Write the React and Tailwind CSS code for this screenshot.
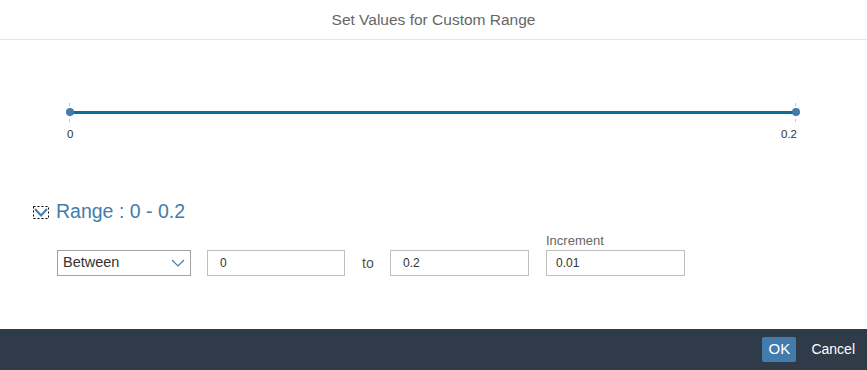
export default function App() {
  const font = { fontFamily: '"Liberation Sans", Arial, sans-serif' };
  return (
    <div className="w-[867px] h-[370px] bg-white flex flex-col overflow-hidden text-[#333]" style={font}>
      <div className="h-[40px] border-b border-[#e5e5e5] flex items-center justify-center text-[15.5px] text-[#666] pt-[1px]">
        Set Values for Custom Range
      </div>
      <div className="flex-1 flex flex-col">
        {/* slider */}
        <div className="relative h-[100px] ml-[66px] mt-[64px] w-[734px]">
          <div className="absolute left-[4px] right-[4px] top-[7px] h-[3px] bg-[#0a6e9c]" />
          <div className="absolute left-[3px] top-[-1px] h-[19px] border-l border-dashed border-[#c8c8c8]" />
          <div className="absolute right-[4px] top-[-1px] h-[19px] border-l border-dashed border-[#c8c8c8]" />
          <div className="absolute left-0 top-[4px] w-[8px] h-[8px] rounded-full bg-[#427cac]" />
          <div className="absolute right-0 top-[4px] w-[8px] h-[8px] rounded-full bg-[#427cac]" />
          <div className="absolute left-[1px] top-[22px] text-[11.5px]">0</div>
          <div className="absolute right-[3px] top-[22px] text-[11.5px]">0.2</div>
        </div>
        <div className="flex items-center ml-[33px] mt-[-4px] h-[24px]">
          <svg width="16" height="13" viewBox="0 0 16 13" className="mr-[7px]">
            <rect x="0.5" y="0.5" width="15" height="12" fill="none" stroke="#000" strokeWidth="1" strokeDasharray="2 2" />
            <path d="M2 3 L8 9.5 L14 3" fill="none" stroke="#427cac" strokeWidth="2" />
          </svg>
          <span className="text-[19.5px] text-[#427cac]">Range : 0 - 0.2</span>
        </div>
        <div className="flex ml-[57px] mt-[8px]">
          <div className="mt-[18px] w-[134px] h-[26px] border border-[#a0a0a0] flex items-center justify-between pl-[5px] pr-[5px] text-[14.5px]">
            <span>Between</span>
            <svg width="14" height="8" viewBox="0 0 14 8"><path d="M1 1 L7 7 L13 1" fill="none" stroke="#427cac" strokeWidth="1.2" /></svg>
          </div>
          <div className="mt-[18px] ml-[16px] w-[138px] h-[26px] border border-[#bfbfbf] flex items-center pl-[12px] text-[12px]">0</div>
          <div className="mt-[18px] w-[45px] h-[26px] flex items-center pl-[17px] text-[14px] text-[#555]">to</div>
          <div className="mt-[18px] w-[139px] h-[26px] border border-[#bfbfbf] flex items-center pl-[12px] text-[12px]">0.2</div>
          <div className="ml-[17px] flex flex-col">
            <div className="h-[18px] text-[13px] text-[#666] leading-[18px]">Increment</div>
            <div className="w-[139px] h-[26px] border border-[#bfbfbf] flex items-center pl-[9px] text-[12px]">0.01</div>
          </div>
        </div>
      </div>
      <div className="h-[41px] bg-[#2f3b48] flex items-center justify-end pr-[12px] gap-[15px]">
        <div className="w-[34px] h-[25px] bg-[#427cac] rounded-[2px] text-white text-[15px] flex items-center justify-center">OK</div>
        <div className="text-white text-[14px]">Cancel</div>
      </div>
    </div>
  );
}
